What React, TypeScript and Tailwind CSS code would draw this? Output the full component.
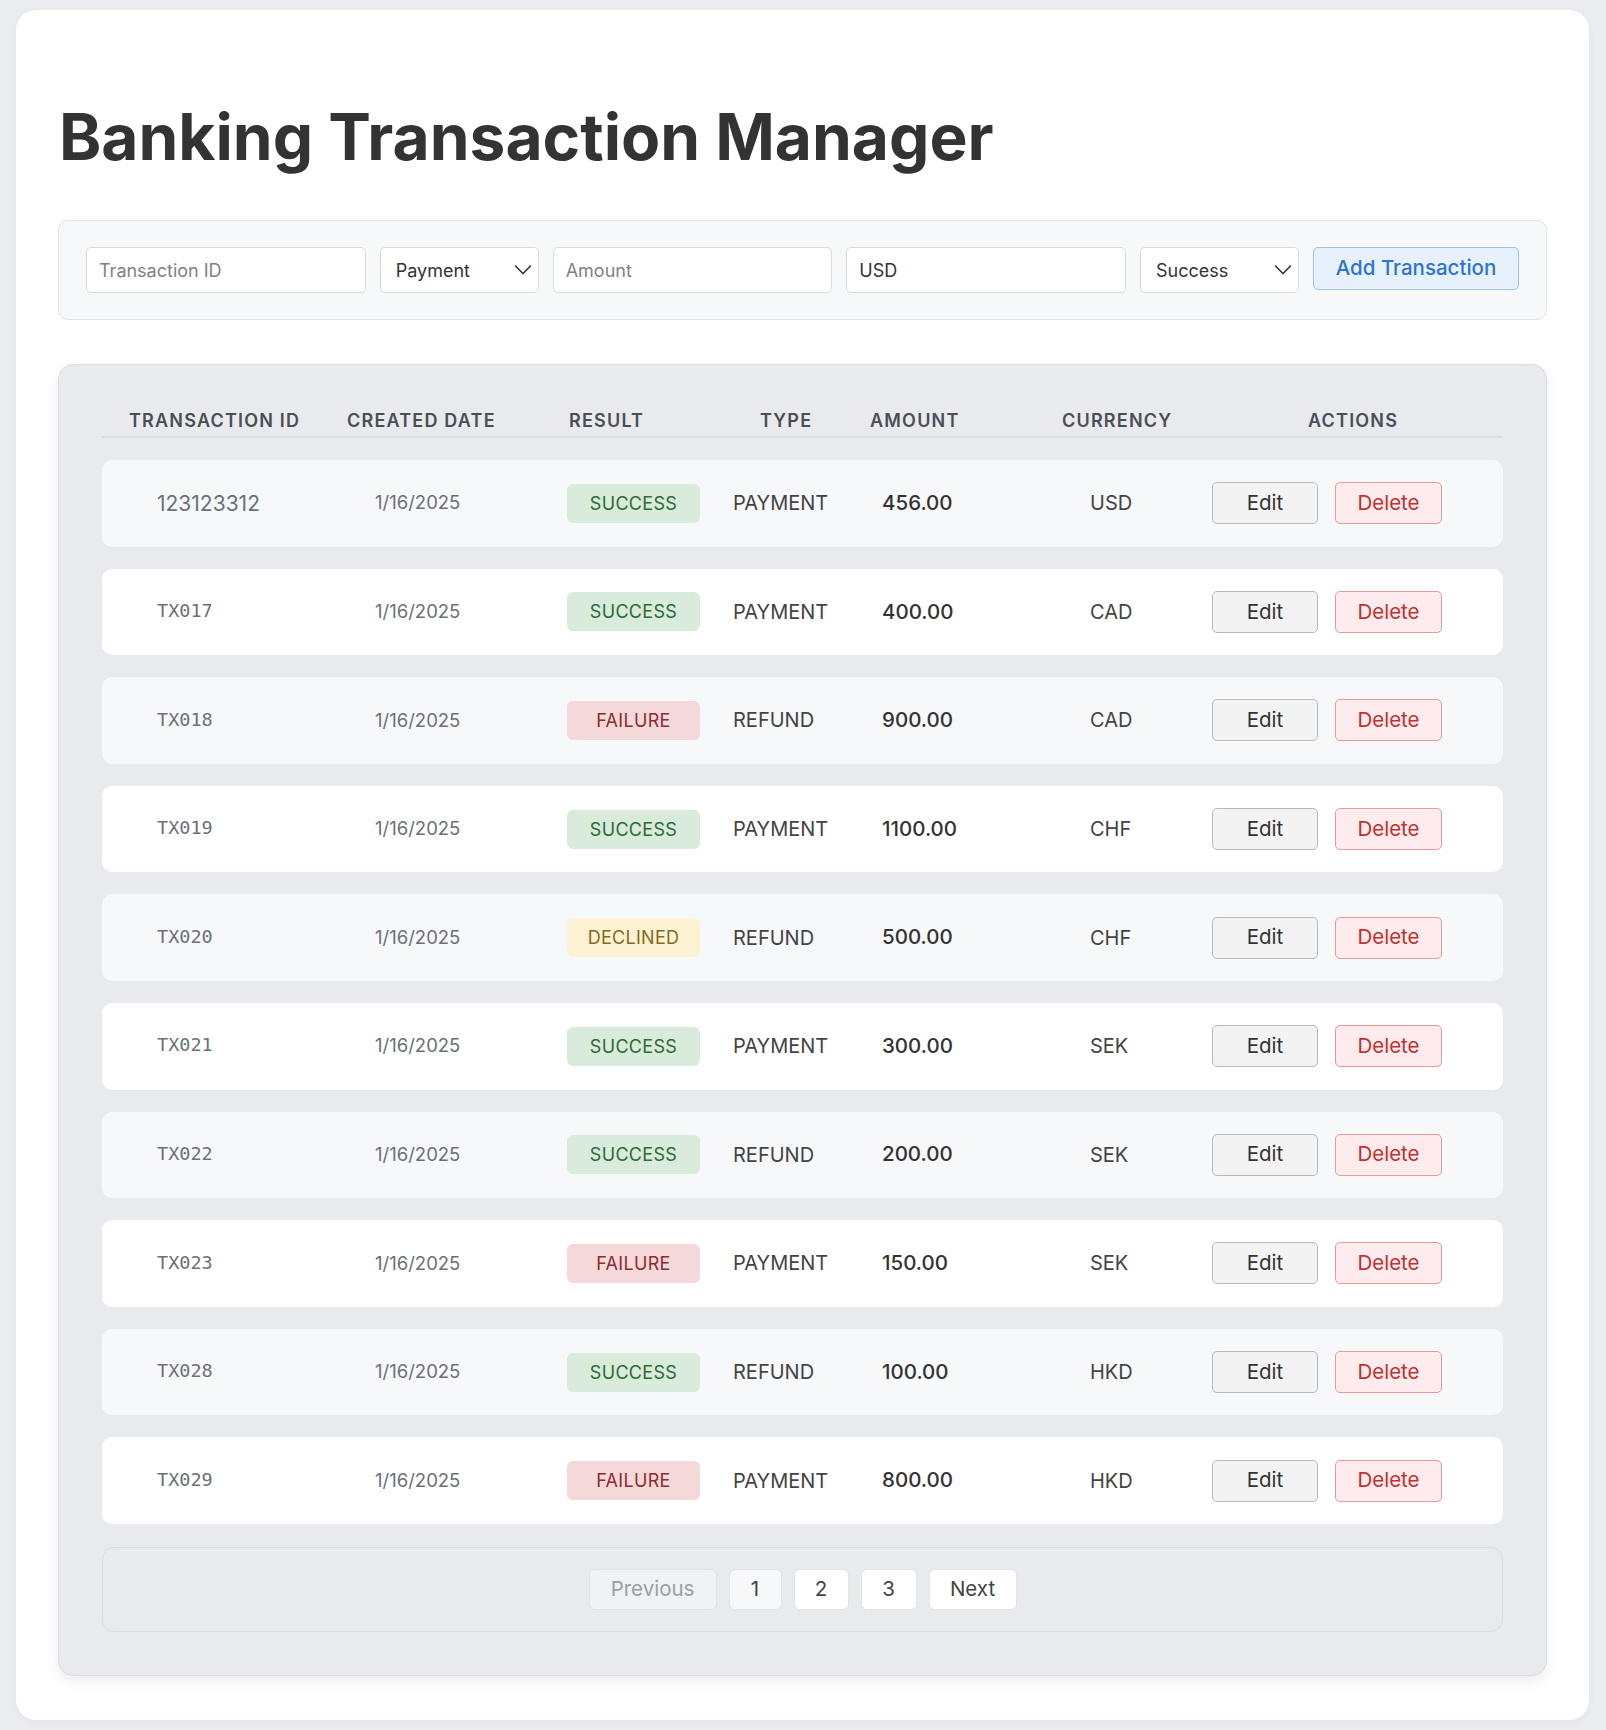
import React from "react";

type Result = "SUCCESS" | "FAILURE" | "DECLINED";

type Transaction = {
  id: string;
  result: Result;
  type: string;
  amount: string;
  currency: string;
  mono?: boolean;
};

const transactions: Transaction[] = [
  { id: "123123312", result: "SUCCESS", type: "PAYMENT", amount: "456.00", currency: "USD" },
  { id: "TX017", result: "SUCCESS", type: "PAYMENT", amount: "400.00", currency: "CAD", mono: true },
  { id: "TX018", result: "FAILURE", type: "REFUND", amount: "900.00", currency: "CAD", mono: true },
  { id: "TX019", result: "SUCCESS", type: "PAYMENT", amount: "1100.00", currency: "CHF", mono: true },
  { id: "TX020", result: "DECLINED", type: "REFUND", amount: "500.00", currency: "CHF", mono: true },
  { id: "TX021", result: "SUCCESS", type: "PAYMENT", amount: "300.00", currency: "SEK", mono: true },
  { id: "TX022", result: "SUCCESS", type: "REFUND", amount: "200.00", currency: "SEK", mono: true },
  { id: "TX023", result: "FAILURE", type: "PAYMENT", amount: "150.00", currency: "SEK", mono: true },
  { id: "TX028", result: "SUCCESS", type: "REFUND", amount: "100.00", currency: "HKD", mono: true },
  { id: "TX029", result: "FAILURE", type: "PAYMENT", amount: "800.00", currency: "HKD", mono: true },
];

const badgeClasses: Record<Result, string> = {
  SUCCESS: "bg-[#d9ecdc] text-[#2d6a35]",
  FAILURE: "bg-[#f4d8da] text-[#8e2c2e]",
  DECLINED: "bg-[#fdf2d2] text-[#85691f]",
};

const Chevron = () => (
  <svg
    className="pointer-events-none absolute right-[7px] top-1/2 -translate-y-1/2"
    width="18"
    height="11"
    viewBox="0 0 18 11"
    fill="none"
  >
    <polyline points="1.5,1.5 9,9 16.5,1.5" stroke="#333" strokeWidth="1.6" strokeLinecap="round" strokeLinejoin="round" />
  </svg>
);

const Select: React.FC<{ value: string; options: string[] }> = ({ value, options }) => (
  <div className="relative w-[159px] shrink-0">
    <select
      defaultValue={value}
      className="h-[46px] w-full appearance-none rounded-[5px] border border-[#d8dbe0] bg-white pl-[15px] pr-8 text-[18px] text-[#333] outline-none"
    >
      {options.map((o) => (
        <option key={o}>{o}</option>
      ))}
    </select>
    <Chevron />
  </div>
);

const TransactionRow: React.FC<{ item: Transaction; index: number }> = ({ item, index }) => {
  return (
    <div
      className={`flex h-[86.6px] items-center rounded-[10px] ${
        index % 2 === 0 ? "bg-[#f7f8fa]" : "bg-white"
      }`}
    >
      <div className="w-[228px] pl-[55px]">
        {item.mono ? (
          <span className="relative -top-[1px] font-['DejaVu_Sans_Mono',monospace] text-[18.5px] text-[#6b7079]">
            {item.id}
          </span>
        ) : (
          <span className="text-[21px] text-[#6b7079]">{item.id}</span>
        )}
      </div>
      <div className="w-[220px] pl-[45px] text-[18.5px] text-[#6b7079]">1/16/2025</div>
      <div className="w-[160px] pl-[17px]">
        <div
          className={`flex h-[39px] w-[133px] items-center justify-center rounded-[6px] text-[18px] tracking-[0.3px] ${badgeClasses[item.result]}`}
        >
          {item.result}
        </div>
      </div>
      <div className="w-[140px] pl-[23px] text-[20px] text-[#444]">{item.type}</div>
      <div className="w-[150px] pl-[32px] text-[20.5px] font-medium text-[#333]">{item.amount}</div>
      <div className="w-[200px] pl-[90px] text-[20px] text-[#444]">{item.currency}</div>
      <div className="flex flex-1 items-center gap-[17px] pl-[12px]">
        <button className="h-[42px] w-[106px] rounded-[5px] border border-[#b9b9b9] bg-[#f3f3f3] text-[20.5px] text-[#333]">
          Edit
        </button>
        <button className="h-[42px] w-[107px] rounded-[5px] border border-[#e89a9a] bg-[#fdebed] text-[20.5px] text-[#c0312f]">
          Delete
        </button>
      </div>
    </div>
  );
};

export default function App() {
  return (
    <div className="min-h-screen bg-[#ebecf0] pb-[10px] pl-4 pr-[17px] pt-[10px] font-['Inter','Liberation_Sans',sans-serif]">
      <div className="rounded-[20px] bg-white px-[42px] pb-[44px] pt-[95px] shadow-[0_2px_10px_rgba(0,0,0,0.04)]">
        <h1 className="mb-[51px] pl-[1px] text-[64px] font-bold leading-none text-[#333]">
          Banking Transaction Manager
        </h1>

        {/* add form */}
        <div className="flex items-start gap-[14px] rounded-[10px] border border-[#e1e3e7] bg-[#f7f8fa] px-[27px] py-[26px]">
          <input
            placeholder="Transaction ID"
            className="h-[46px] min-w-0 flex-1 rounded-[5px] border border-[#d8dbe0] bg-white px-[12px] text-[18px] text-[#333] outline-none placeholder:text-[#7d828a]"
          />
          <Select value="Payment" options={["Payment", "Refund"]} />
          <input
            placeholder="Amount"
            className="h-[46px] min-w-0 flex-1 rounded-[5px] border border-[#d8dbe0] bg-white px-[12px] text-[18px] text-[#333] outline-none placeholder:text-[#7d828a]"
          />
          <input
            defaultValue="USD"
            className="h-[46px] min-w-0 flex-1 rounded-[5px] border border-[#d8dbe0] bg-white px-[12px] text-[18px] text-[#333] outline-none"
          />
          <Select value="Success" options={["Success", "Failure", "Declined"]} />
          <button className="h-[43px] w-[206px] shrink-0 rounded-[5px] border border-[#9cc4ef] bg-[#e6f1fc] text-[20.5px] font-medium text-[#2f74d0]">
            Add Transaction
          </button>
        </div>

        {/* table */}
        <div className="mt-[44px] rounded-[15px] border border-[#dcdde1] bg-[#e9eaee] px-[43px] pb-[43px] pt-[44px] shadow-[0_6px_14px_rgba(0,0,0,0.07)]">
          <div className="flex border-b-2 border-[#dcdde2] pb-[3px] text-[18px] font-semibold uppercase leading-[24px] tracking-[1.2px] text-[#4a4e55]">
            <div className="w-[228px] pl-[27px]">Transaction ID</div>
            <div className="w-[220px] pl-[17px]">Created Date</div>
            <div className="w-[160px] pl-[19px]">Result</div>
            <div className="w-[140px] pl-[50px]">Type</div>
            <div className="w-[150px] pl-[20px]">Amount</div>
            <div className="w-[200px] pl-[62px]">Currency</div>
            <div className="flex-1 pl-[108px]">Actions</div>
          </div>

          <div className="mt-[22px] flex flex-col gap-[22px]">
            {transactions.map((t, i) => (
              <TransactionRow key={t.id} item={t} index={i} />
            ))}
          </div>

          {/* pagination */}
          <div className="mt-[23px] flex h-[85px] items-center justify-center gap-[12px] rounded-[12px] border border-[#dcdde2]">
            <button className="h-[41px] w-[128px] rounded-[6px] border border-[#e2e3e7] bg-[#f1f2f4] text-[20.5px] text-[#9a9ea5]">
              Previous
            </button>
            <button className="h-[41px] w-[53px] rounded-[6px] border border-[#e2e3e7] bg-[#f7f8fa] text-[20.5px] text-[#444]">
              1
            </button>
            <button className="h-[41px] w-[55px] rounded-[6px] border border-[#e2e3e7] bg-white text-[20.5px] text-[#444]">
              2
            </button>
            <button className="h-[41px] w-[56px] rounded-[6px] border border-[#e2e3e7] bg-white text-[20.5px] text-[#444]">
              3
            </button>
            <button className="h-[41px] w-[88px] rounded-[6px] border border-[#e2e3e7] bg-white text-[20.5px] text-[#444]">
              Next
            </button>
          </div>
        </div>
      </div>
    </div>
  );
}
